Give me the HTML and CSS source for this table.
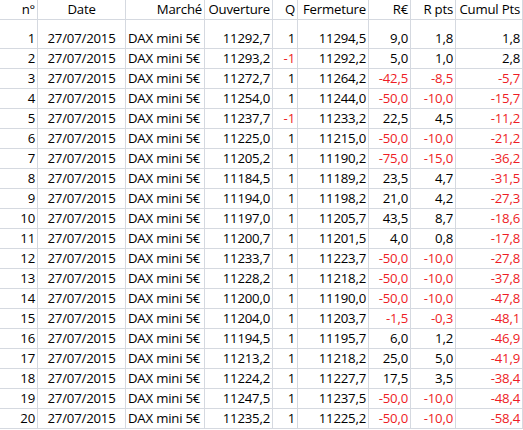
FILE: index.html
```html
<!DOCTYPE html>
<html lang="fr">
<head>
<meta charset="utf-8">
<title>Trades</title>
<link rel="stylesheet" href="styles.css">
</head>
<body>
<div class="sheet" id="sheet">
  <div class="c r hd">n°</div><div class="c m hd">Date</div><div class="c r hd">Marché</div><div class="c r hd">Ouverture</div><div class="c r hd">Q</div><div class="c r hd">Fermeture</div><div class="c r hd">R€</div><div class="c r hd">R pts</div><div class="c r hd">Cumul Pts</div>
</div>
<script src="app.js"></script>
</body>
</html>
```
FILE: app.js
```js
const rows = [
  ["11292,7","1","11294,5","9,0","1,8","1,8"],
  ["11293,2","-1","11292,2","5,0","1,0","2,8"],
  ["11272,7","1","11264,2","-42,5","-8,5","-5,7"],
  ["11254,0","1","11244,0","-50,0","-10,0","-15,7"],
  ["11237,7","-1","11233,2","22,5","4,5","-11,2"],
  ["11225,0","1","11215,0","-50,0","-10,0","-21,2"],
  ["11205,2","1","11190,2","-75,0","-15,0","-36,2"],
  ["11184,5","1","11189,2","23,5","4,7","-31,5"],
  ["11194,0","1","11198,2","21,0","4,2","-27,3"],
  ["11197,0","1","11205,7","43,5","8,7","-18,6"],
  ["11200,7","1","11201,5","4,0","0,8","-17,8"],
  ["11233,7","1","11223,7","-50,0","-10,0","-27,8"],
  ["11228,2","1","11218,2","-50,0","-10,0","-37,8"],
  ["11200,0","1","11190,0","-50,0","-10,0","-47,8"],
  ["11204,0","1","11203,7","-1,5","-0,3","-48,1"],
  ["11194,5","1","11195,7","6,0","1,2","-46,9"],
  ["11213,2","1","11218,2","25,0","5,0","-41,9"],
  ["11224,2","1","11227,7","17,5","3,5","-38,4"],
  ["11247,5","1","11237,5","-50,0","-10,0","-48,4"],
  ["11235,2","1","11225,2","-50,0","-10,0","-58,4"]
];
const sheet = document.getElementById("sheet");
function cell(text, cls) {
  const d = document.createElement("div");
  d.className = "c " + cls + (text.startsWith("-") ? " neg" : "");
  d.textContent = text;
  sheet.appendChild(d);
}
rows.forEach((r) => {
  cell(String(rows.indexOf(r) + 1), "r");
  cell("27/07/2015", "m");
  cell("DAX mini 5€", "l");
  r.forEach(v => cell(v, "r"));
});
```
FILE: styles.css
```css
html, body {
  margin: 0;
  padding: 0;
  background: #ffffff;
}
.sheet {
  display: grid;
  grid-template-columns: 38px 88px 79px 68px 25px 71px 42px 45px 67px;
  grid-template-rows: 20px 29px repeat(19, 20px);
  font-family: "Open Sans", sans-serif;
  font-size: 13.2px;
  letter-spacing: -0.2px;
  color: #000;
}
.c {
  box-sizing: border-box;
  border-right: 1px solid #d5d9e0;
  border-bottom: 1px solid #d5d9e0;
  display: flex;
  align-items: flex-end;
  padding: 0 2px 2px 2px;
  line-height: 16px;
  white-space: nowrap;
  overflow: hidden;
}
.r { justify-content: flex-end; }
.m { justify-content: center; }
.l { justify-content: flex-start; }
.neg { color: #ee1c25; }
```
